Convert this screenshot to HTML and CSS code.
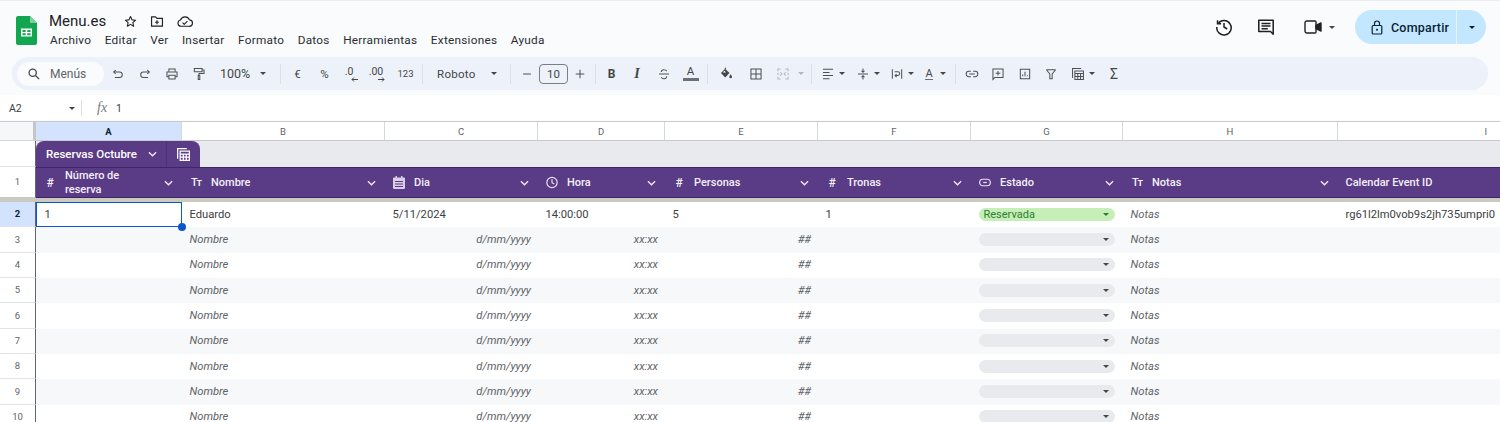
FILE: index.html
```html
<!DOCTYPE html>
<html lang="es">
<head>
  <meta charset="UTF-8">
  <title>Menu.es</title>
  <link rel="stylesheet" href="styles.css">
</head>
<body>
  <header class="topbar">
    <svg class="logo" width="21" height="29" viewBox="0 0 21 29">
      <path d="M2 0h12l7 7v20a2 2 0 0 1-2 2H2a2 2 0 0 1-2-2V2a2 2 0 0 1 2-2z" fill="#11a64f"/>
      <path d="M14 0l7 7h-7z" fill="#7fd0a0"/>
      <path d="M5 12.500h11v8H5z M6.500 14v2h3.200v-2z M11.300 14v2h3.200v-2z M6.500 17.300v2h3.200v-2z M11.300 17.300v2h3.200v-2z" fill="#fff" fill-rule="evenodd"/>
    </svg>
    <div class="doc">
      <div class="doc-title">
        <span class="doc-name">Menu.es</span>
        <svg class="star" width="13" height="13" viewBox="0 0 18 18" fill="none" stroke="#202124" stroke-width="1.500" stroke-linejoin="round"><path d="M9 2l2.100 4.700 5 .5-3.800 3.400 1.100 5L9 13l-4.400 2.600 1.100-5L1.900 7.200l5-.5z"/></svg>
        <svg width="14" height="13" viewBox="0 0 18 16" fill="none" stroke="#202124" stroke-width="1.500" stroke-linejoin="round"><path d="M2 2h5l2 2h7v10H2z"/><path d="M9 6.500v5M6.500 9h5"/></svg>
        <svg width="16" height="13" viewBox="0 0 20 16" fill="none" stroke="#202124" stroke-width="1.400" stroke-linejoin="round"><path d="M5 14a4 4 0 0 1-.6-7.900A6 6 0 0 1 15.600 6 4 4 0 0 1 15 14z"/><path d="M7 9.500l2 2 4-4"/></svg>
      </div>
      <nav class="menu">
        <span>Archivo</span><span>Editar</span><span>Ver</span><span>Insertar</span><span>Formato</span><span>Datos</span><span>Herramientas</span><span>Extensiones</span><span>Ayuda</span>
      </nav>
    </div>
    <div class="actions">
      <svg class="act-history" width="18" height="18" viewBox="0 0 20 20" fill="none" stroke="#202124" stroke-width="1.700"><path d="M3.600 6A8 8 0 1 1 2 10"/><path d="M2.800 2.500v4h4"/><path d="M10 5.500V10l3.500 2.200"/></svg>
      <svg class="act-comment" width="18" height="18" viewBox="0 0 20 20" fill="none" stroke="#202124" stroke-width="1.700" stroke-linejoin="round"><path d="M2 2.500h16V18l-3-3H2z"/><path d="M5 6h10M5 9h10M5 12h7"/></svg>
      <svg class="act-video" width="18" height="14" viewBox="0 0 18 14" fill="none" stroke="#202124" stroke-width="1.400" stroke-linejoin="round"><path d="M3 1h8a1 1 0 0 1 1 1v10a1 1 0 0 1-1 1H3a2 2 0 0 1-2-2V3a2 2 0 0 1 2-2z"/><path d="M12 5.500L17 3v8l-5-2.500z" fill="#202124"/></svg>
      <i class="caret act-caret"></i>
      <div class="share">
        <div class="share-main">
          <svg width="12" height="15" viewBox="0 0 12 15" fill="none" stroke="#0b1f33" stroke-width="1.200"><rect x="1.200" y="5.500" width="9.600" height="8.500" rx="1"/><path d="M3.500 5.500V3.500a2.500 2.500 0 0 1 5 0v2"/><circle cx="6" cy="9.800" r="1" fill="#0b1f33" stroke="none"/></svg>
          <span>Compartir</span>
        </div>
        <div class="share-more"><i class="caret"></i></div>
      </div>
    </div>
  </header>

  <div class="toolbar">
    <div class="search">
      <svg width="12" height="12" viewBox="0 0 14 14" fill="none" stroke="#444746" stroke-width="1.500"><circle cx="5.500" cy="5.500" r="4.200"/><path d="M8.700 8.700L13 13"/></svg>
      <span>Menús</span>
    </div>
    <div class="tool"><svg class="ico" viewBox="0 0 18 18"><path d="M6 4L3.500 6.500 6 9"/><path d="M3.500 6.500H11a3.500 3.500 0 0 1 0 7H5"/></svg></div>
    <div class="tool"><svg class="ico" viewBox="0 0 18 18"><path d="M12 4l2.500 2.500L12 9"/><path d="M14.500 6.500H7a3.500 3.500 0 0 0 0 7h6"/></svg></div>
    <div class="tool"><svg class="ico" viewBox="0 0 18 18"><path d="M5 6V2.500h8V6"/><path d="M5 12.500H2.500v-6h13v6H13"/><path d="M5 10.500h8v5H5z"/></svg></div>
    <div class="tool"><svg class="ico" viewBox="0 0 18 18"><path d="M3 2h10v4H3z"/><path d="M13 4h2.500v4.500H9V11"/><path d="M8 11h2v5H8z"/></svg></div>
    <div class="tool tool-zoom"><span>100%</span><i class="caret"></i></div>
    <i class="sep"></i>
    <div class="tool tool-text">€</div>
    <div class="tool tool-text">%</div>
    <div class="tool tool-dec"><span>.0</span><svg width="7" height="5" viewBox="0 0 7 5" class="dec-arrow" fill="none" stroke="#444746"><path d="M7 2.500H1M3 .5L1 2.500l2 2"/></svg></div>
    <div class="tool tool-dec"><span>.00</span><svg width="7" height="5" viewBox="0 0 7 5" class="dec-arrow" fill="none" stroke="#444746"><path d="M0 2.500h6M4 .5l2 2-2 2"/></svg></div>
    <div class="tool tool-num">123</div>
    <i class="sep"></i>
    <div class="tool tool-font"><span>Roboto</span><i class="caret"></i></div>
    <i class="sep"></i>
    <div class="tool tool-25"><svg class="ico" viewBox="0 0 18 18"><path d="M4 9h10"/></svg></div>
    <div class="size-box">10</div>
    <div class="tool tool-24"><svg class="ico" viewBox="0 0 18 18"><path d="M3.500 9h11M9 3.500v11"/></svg></div>
    <i class="sep"></i>
    <div class="tool tool-25 tool-bold">B</div>
    <div class="tool tool-26 tool-italic">I</div>
    <div class="tool"><svg class="ico" viewBox="0 0 18 18"><path d="M2.500 9h13"/><path d="M5.500 6.500a3 3 0 0 1 3.500-3c1.700 0 3 .8 3.500 2"/><path d="M12.500 12a3 3 0 0 1-3.500 3c-1.700 0-3-.8-3.500-2"/></svg></div>
    <div class="tool tool-color"><span>A</span><i class="color-bar"></i></div>
    <i class="sep"></i>
    <div class="tool tool-30"><svg width="14" height="15" viewBox="0 0 18 18" fill="#444746"><path d="M8 1l1.200 1.200-1 1 5.300 5.300-5.500 5.500L2.500 8.500 7 4z M7 5.500L4.700 7.800h4.600z"/><path d="M15 10c1 1.500 1.700 2.500 1.700 3.400a1.700 1.700 0 0 1-3.400 0c0-.9.700-1.900 1.700-3.400z"/></svg></div>
    <div class="tool tool-30"><svg class="ico" viewBox="0 0 18 18"><path d="M2.500 2.500h13v13h-13zM9 2.500v13M2.500 9h13"/></svg></div>
    <div class="tool tool-drop tool-merge"><svg class="ico ico-off" viewBox="0 0 18 18"><path d="M6 2.500H2.500v3M12 2.500h3.500v3M6 15.500H2.500v-3M12 15.500h3.500v-3M2.500 7.500v3M15.500 7.500v3"/><path d="M5.500 7l2 2-2 2M12.500 7l-2 2 2 2"/></svg><i class="caret caret-off"></i></div>
    <i class="sep"></i>
    <div class="tool tool-drop"><svg class="ico" viewBox="0 0 18 18"><path d="M2.500 3h13M2.500 7h8.500M2.500 11h13M2.500 15h8.500"/></svg><i class="caret"></i></div>
    <div class="tool tool-drop"><svg class="ico" viewBox="0 0 18 18"><path d="M2.500 9h13"/><path d="M9 2v4.500M7 4.800l2 2 2-2M9 16v-4.500M7 13.200l2-2 2 2"/></svg><i class="caret"></i></div>
    <div class="tool tool-34"><svg class="ico" viewBox="0 0 18 18"><path d="M3 3v12M15 3v12"/><path d="M6 6h4a2.500 2.500 0 0 1 0 5H6.500M8.500 9l-2 2 2 2"/></svg><i class="caret"></i></div>
    <div class="tool tool-33"><span class="rotate-a">A</span><i class="caret"></i></div>
    <i class="sep"></i>
    <div class="tool tool-25"><svg class="ico" viewBox="0 0 18 18"><path d="M7.500 5.500H5a3.500 3.500 0 0 0 0 7h2.500M10.500 5.500H13a3.500 3.500 0 0 1 0 7h-2.500M5.500 9h7"/></svg></div>
    <div class="tool"><svg class="ico" viewBox="0 0 18 18"><path d="M2.500 2.500h13v11H5l-2.500 2.500z"/><path d="M9 5v6M6 8h6"/></svg></div>
    <div class="tool"><svg class="ico" viewBox="0 0 18 18"><path d="M3 3h12v12H3z"/><path d="M6 12V9.500M9 12V6M12 12v-1.500"/></svg></div>
    <div class="tool tool-26"><svg class="ico" viewBox="0 0 18 18"><path d="M3 3.500h12M3 3.500L7.500 9v6h3V9L15 3.500"/></svg></div>
    <div class="tool tool-37"><svg class="ico" viewBox="0 0 18 18"><path d="M2 14V2h11"/><path d="M5 5h11v11H5zM5 8.500h11M5 12.200h11M8.700 8.500V16M12.300 8.500V16"/></svg><i class="caret"></i></div>
    <div class="tool tool-26 tool-sigma">Σ</div>
  </div>

  <div class="formula">
    <span class="cell-ref">A2</span>
    <i class="caret"></i>
    <i class="formula-sep"></i>
    <span class="fx">fx</span>
    <span class="formula-value">1</span>
  </div>

  <main class="sheet">
    <div class="row col-heads">
      <div class="corner"></div>
      <div class="col-head is-active">A</div>
      <div class="col-head">B</div>
      <div class="col-head">C</div>
      <div class="col-head">D</div>
      <div class="col-head">E</div>
      <div class="col-head">F</div>
      <div class="col-head">G</div>
      <div class="col-head">H</div>
      <div class="col-head col-last">I</div>
    </div>

    <div class="tab-row">
      <div class="row-num"></div>
      <div class="tab-band">
        <div class="tab">
          <span class="tab-name">Reservas Octubre</span>
          <svg class="chev tab-chev" viewBox="0 0 10 6"><path d="M1 1l4 4 4-4"/></svg>
          <div class="tab-view">
            <svg width="15" height="15" viewBox="0 0 18 18" fill="none" stroke="#fff" stroke-width="1.500"><path d="M2 14V2h11"/><path d="M5 5h11v11H5zM5 8.500h11M5 12.200h11M8.700 8.500V16M12.300 8.500V16"/></svg>
          </div>
        </div>
      </div>
    </div>

    <div class="row head-row">
      <div class="row-num">1</div>
      <div class="th"><b class="th-ico">#</b><span class="th-label th-wrap">Número de reserva</span><svg class="chev" viewBox="0 0 10 6"><path d="M1 1l4 4 4-4"/></svg></div>
      <div class="th"><b class="th-ico th-type">Tт</b><span class="th-label">Nombre</span><svg class="chev" viewBox="0 0 10 6"><path d="M1 1l4 4 4-4"/></svg></div>
      <div class="th"><svg class="th-svg" viewBox="0 0 12 13" fill="#d9cfe8"><path d="M2.500 0h1.500v1.500h4V0h1.500v1.500H11a1 1 0 0 1 1 1V12a1 1 0 0 1-1 1H1a1 1 0 0 1-1-1V2.500a1 1 0 0 1 1-1h1.500z"/><path d="M2 5h8v1H2zM2 7.500h8v1H2zM2 10h8v1H2z" fill="#5a3b85"/></svg><span class="th-label">Dia</span><svg class="chev" viewBox="0 0 10 6"><path d="M1 1l4 4 4-4"/></svg></div>
      <div class="th"><svg class="th-svg" viewBox="0 0 13 13" fill="none" stroke="#e9e2f3" stroke-width="1.300"><circle cx="6.500" cy="6.500" r="5.600"/><path d="M6.500 3v3.700l2.500 1.500"/></svg><span class="th-label">Hora</span><svg class="chev" viewBox="0 0 10 6"><path d="M1 1l4 4 4-4"/></svg></div>
      <div class="th"><b class="th-ico">#</b><span class="th-label">Personas</span><svg class="chev" viewBox="0 0 10 6"><path d="M1 1l4 4 4-4"/></svg></div>
      <div class="th"><b class="th-ico">#</b><span class="th-label">Tronas</span><svg class="chev" viewBox="0 0 10 6"><path d="M1 1l4 4 4-4"/></svg></div>
      <div class="th"><svg class="th-svg" viewBox="0 0 13 13" fill="none" stroke="#e9e2f3" stroke-width="1.300"><rect x=".7" y="3" width="11.600" height="7" rx="3.500"/><path d="M4.500 6.500h4"/></svg><span class="th-label">Estado</span><svg class="chev" viewBox="0 0 10 6"><path d="M1 1l4 4 4-4"/></svg></div>
      <div class="th"><b class="th-ico th-type">Tт</b><span class="th-label">Notas</span><svg class="chev" viewBox="0 0 10 6"><path d="M1 1l4 4 4-4"/></svg></div>
      <div class="th th-plain"><span class="th-label">Calendar Event ID</span></div>
    </div>

    <div class="row data is-current">
      <div class="row-num">2</div>
      <div class="td td-selected">1<i class="handle"></i></div>
      <div class="td">Eduardo</div>
      <div class="td">5/11/2024</div>
      <div class="td">14:00:00</div>
      <div class="td">5</div>
      <div class="td">1</div>
      <div class="td"><div class="chip chip-green"><span>Reservada</span><i class="caret"></i></div></div>
      <div class="td hint">Notas</div>
      <div class="td">rg61l2lm0vob9s2jh735umpri0</div>
    </div>
    <div class="row data alt">
      <div class="row-num">3</div><div class="td"></div><div class="td hint">Nombre</div><div class="td hint right">d/mm/yyyy</div><div class="td hint right">xx:xx</div><div class="td hint right">##</div><div class="td"></div><div class="td"><div class="chip"><i class="caret"></i></div></div><div class="td hint">Notas</div><div class="td"></div>
    </div>
    <div class="row data">
      <div class="row-num">4</div><div class="td"></div><div class="td hint">Nombre</div><div class="td hint right">d/mm/yyyy</div><div class="td hint right">xx:xx</div><div class="td hint right">##</div><div class="td"></div><div class="td"><div class="chip"><i class="caret"></i></div></div><div class="td hint">Notas</div><div class="td"></div>
    </div>
    <div class="row data alt">
      <div class="row-num">5</div><div class="td"></div><div class="td hint">Nombre</div><div class="td hint right">d/mm/yyyy</div><div class="td hint right">xx:xx</div><div class="td hint right">##</div><div class="td"></div><div class="td"><div class="chip"><i class="caret"></i></div></div><div class="td hint">Notas</div><div class="td"></div>
    </div>
    <div class="row data">
      <div class="row-num">6</div><div class="td"></div><div class="td hint">Nombre</div><div class="td hint right">d/mm/yyyy</div><div class="td hint right">xx:xx</div><div class="td hint right">##</div><div class="td"></div><div class="td"><div class="chip"><i class="caret"></i></div></div><div class="td hint">Notas</div><div class="td"></div>
    </div>
    <div class="row data alt">
      <div class="row-num">7</div><div class="td"></div><div class="td hint">Nombre</div><div class="td hint right">d/mm/yyyy</div><div class="td hint right">xx:xx</div><div class="td hint right">##</div><div class="td"></div><div class="td"><div class="chip"><i class="caret"></i></div></div><div class="td hint">Notas</div><div class="td"></div>
    </div>
    <div class="row data">
      <div class="row-num">8</div><div class="td"></div><div class="td hint">Nombre</div><div class="td hint right">d/mm/yyyy</div><div class="td hint right">xx:xx</div><div class="td hint right">##</div><div class="td"></div><div class="td"><div class="chip"><i class="caret"></i></div></div><div class="td hint">Notas</div><div class="td"></div>
    </div>
    <div class="row data alt">
      <div class="row-num">9</div><div class="td"></div><div class="td hint">Nombre</div><div class="td hint right">d/mm/yyyy</div><div class="td hint right">xx:xx</div><div class="td hint right">##</div><div class="td"></div><div class="td"><div class="chip"><i class="caret"></i></div></div><div class="td hint">Notas</div><div class="td"></div>
    </div>
    <div class="row data">
      <div class="row-num">10</div><div class="td"></div><div class="td hint">Nombre</div><div class="td hint right">d/mm/yyyy</div><div class="td hint right">xx:xx</div><div class="td hint right">##</div><div class="td"></div><div class="td"><div class="chip"><i class="caret"></i></div></div><div class="td hint">Notas</div><div class="td"></div>
    </div>
  </main>
</body>
</html>
```

FILE: styles.css
```css
* {
  margin: 0;
  padding: 0;
  box-sizing: border-box;
}

html, body {
  height: 422px;
  overflow: hidden;
}

body {
  background: #f9fbfd;
  font-family: Roboto, "Liberation Sans", sans-serif;
  color: #202124;
  width: 1500px;
}

i {
  display: block;
}

.caret {
  width: 0;
  height: 0;
  border-left: 3.5px solid transparent;
  border-right: 3.5px solid transparent;
  border-top: 3.5px solid #444746;
}

.caret-off {
  border-top-color: #b4b7ba;
}

/* top bar */
.topbar {
  height: 57px;
  display: flex;
  align-items: flex-start;
  padding: 15px 14px 0 16px;
  border-top: 1px solid #ececee;
}

.logo {
  flex: none;
}

.doc {
  margin-left: 12px;
  margin-top: -4px;
}

.doc-title {
  display: flex;
  align-items: center;
  height: 18px;
}

.doc-name {
  font-size: 15px;
  width: 75px;
}

.doc-title svg {
  margin-right: 13px;
}

.menu {
  display: flex;
  gap: 13.500px;
  margin-top: 3px;
  margin-left: 1px;
  font-size: 11.800px;
  letter-spacing: .25px;
  color: #2b2d30;
}

.actions {
  margin-left: auto;
  margin-top: -6px;
  height: 34px;
  display: flex;
  align-items: center;
}

.act-comment {
  margin-left: 24px;
}

.act-video {
  margin-left: 29px;
}

.act-caret {
  margin-left: 7px;
}

.share {
  margin-left: 20px;
  width: 131px;
  height: 34px;
  background: #c2e7ff;
  border-radius: 17px;
  display: flex;
  color: #0b1f33;
}

.share-main {
  width: 102px;
  padding-left: 16px;
  display: flex;
  align-items: center;
  gap: 8px;
  font-size: 12.500px;
  font-weight: 500;
  letter-spacing: .2px;
  border-right: 1px solid #e3f3ff;
}

.share-more {
  flex: 1;
  display: flex;
  align-items: center;
  justify-content: center;
}

.share-more .caret {
  border-top-color: #0b1f33;
}

/* toolbar */
.toolbar {
  height: 33px;
  margin: 0 12px;
  padding-left: 5px;
  background: #edf2fa;
  border-radius: 16px;
  display: flex;
  align-items: center;
  color: #444746;
  font-size: 11px;
}

.search {
  width: 87px;
  height: 24px;
  background: #f9fbfd;
  border-radius: 12px;
  display: flex;
  align-items: center;
  gap: 10px;
  padding-left: 11px;
  font-size: 12px;
  color: #5f6368;
}

.tool {
  width: 27px;
  height: 24px;
  flex: none;
  display: flex;
  align-items: center;
  justify-content: center;
}

.ico {
  width: 14px;
  height: 14px;
  fill: none;
  stroke: #4d5053;
  stroke-width: 1.300;
}

.ico-off {
  stroke: #b4b7ba;
}

.tool-zoom {
  width: 65px;
  justify-content: flex-start;
  padding-left: 8px;
  gap: 10px;
  font-size: 12.500px;
}

.sep {
  flex: none;
  width: 1px;
  height: 20px;
  margin: 0 3px;
  background: #dde1e7;
}

.tool-text {
  font-size: 11.500px;
}

.tool-dec {
  position: relative;
  font-size: 10.500px;
  padding: 0 5px 5px 0;
}

.dec-arrow {
  position: absolute;
  right: 7px;
  bottom: 4px;
}

.tool-num {
  font-size: 9.500px;
}

.tool-font {
  width: 81px;
  justify-content: flex-start;
  padding-left: 11px;
  gap: 15px;
  font-size: 11.500px;
  letter-spacing: .3px;
}

.tool-24 { width: 24px; }
.tool-25 { width: 25px; }
.tool-26 { width: 26px; }
.tool-30 { width: 30px; }
.tool-33 { width: 33px; gap: 7px; }
.tool-34 { width: 34px; gap: 4px; }
.tool-37 { width: 37px; gap: 4px; }

.tool-drop {
  width: 35px;
  gap: 4px;
}

.tool-merge {
  width: 37px;
  gap: 8px;
}

.size-box {
  width: 29px;
  height: 20px;
  flex: none;
  border: 1px solid #7b7e82;
  border-radius: 4px;
  display: flex;
  align-items: center;
  justify-content: center;
  font-size: 11.500px;
}

.tool-bold {
  font-weight: 700;
  font-size: 12px;
}

.tool-italic {
  font-family: "Liberation Serif", serif;
  font-style: italic;
  font-weight: 700;
  font-size: 14px;
}

.tool-color {
  flex-direction: column;
  font-size: 11.500px;
  line-height: 11px;
}

.color-bar {
  width: 16px;
  height: 3px;
  margin-top: 1px;
  background: #6d7074;
}

.rotate-a {
  font-size: 11px;
  border-bottom: 1.500px solid #6d7074;
  line-height: 11px;
}

.tool-sigma {
  font-size: 14px;
}

/* formula bar */
.formula {
  height: 25px;
  margin-top: 5px;
  display: flex;
  align-items: center;
  background: #fff;
  font-size: 10.500px;
  padding: 1px 0 0 9px;
  color: #3c4043;
}

.cell-ref {
  width: 60px;
}

.formula-sep {
  width: 1px;
  height: 16px;
  background: #dadce0;
  margin-left: 6px;
}

.fx {
  font-family: "Liberation Serif", serif;
  font-style: italic;
  font-size: 14px;
  color: #777a7e;
  margin-left: 15px;
  width: 19px;
}

/* sheet */
.sheet {
  margin-top: 1px;
  background: #fff;
  border-top: 1px solid #c7c9cc;
  height: 301px;
  overflow: hidden;
}

.row {
  display: grid;
  grid-template-columns: 36px 146px 203px 153px 127px 153px 153px 152px 215px 162px;
}

.col-heads {
  height: 19px;
  font-size: 9.500px;
  color: #5f6368;
}

.corner {
  background: #f6f7f8;
  border-right: 3px solid #c4c6c9;
  border-bottom: 1px solid #d6d8db;
}

.col-head {
  display: flex;
  align-items: center;
  justify-content: center;
  border-right: 1px solid #d6d8db;
  border-bottom: 1px solid #c7c9cc;
}

.col-last {
  justify-content: flex-end;
  padding-right: 13px;
  border-right: 0;
}

.col-head.is-active {
  background: #d3e3fd;
  color: #0b1f33;
  font-weight: 700;
}

.tab-row {
  height: 26px;
  display: grid;
  grid-template-columns: 36px 1fr;
}

.row-num {
  display: flex;
  align-items: center;
  justify-content: center;
  background: #fff;
  font-size: 9.500px;
  line-height: 1;
  color: #5f6368;
  border-right: 1.500px solid #62666b;
  border-bottom: 1px solid #e1e3e6;
}

.tab-band {
  background: #e8eaed;
}

.tab {
  width: 164px;
  height: 26px;
  background: #5a3b85;
  border-radius: 8px 8px 0 0;
  display: flex;
  align-items: center;
  color: #fff;
  padding-left: 10px;
  font-size: 11.500px;
  font-weight: 500;
}

.tab-name {
  width: 102px;
}

.tab-view {
  margin-left: 9px;
  padding-left: 9px;
  height: 26px;
  border-left: 1px solid #4d3176;
  display: flex;
  align-items: center;
}

.chev {
  width: 9px;
  height: 6px;
  fill: none;
  stroke: #efeaf6;
  stroke-width: 1.500;
  flex: none;
}

.head-row {
  height: 35px;
  border-bottom: 4px solid #cbcac1;
}

.head-row .row-num {
  height: 31px;
  border-bottom: 1px solid #c7c9cc;
}

.th {
  height: 31px;
  background: #5a3b85;
  border-top: 1px solid #3d2566;
  border-bottom: 1px solid #3d2566;
  color: #f4f0fa;
  display: flex;
  align-items: center;
  padding-left: 7.500px;
  padding-right: 9px;
  font-size: 11px;
  font-weight: 500;
}

.th-ico {
  width: 13px;
  margin-right: 8.500px;
  text-align: center;
  font-size: 12px;
  font-weight: 500;
  flex: none;
}

.th-type {
  font-size: 11px;
  letter-spacing: -1px;
}

.th-svg {
  width: 12px;
  height: 13px;
  margin-right: 9.500px;
  flex: none;
}

.th-label {
  flex: 1;
}

.th-wrap {
  line-height: 13.500px;
  padding-right: 22px;
}

.data {
  height: 25.330px;
}

.alt .td {
  background: #f6f8f9;
}

.is-current .row-num {
  background: #d3e3fd;
  color: #0b1f33;
  font-weight: 700;
}

.td {
  position: relative;
  display: flex;
  align-items: center;
  padding: 0 7px 1px 7.500px;
  font-size: 11.200px;
  line-height: 1;
  color: #3c4043;
  white-space: nowrap;
}

.hint {
  font-style: italic;
  color: #5f6368;
}

.right {
  justify-content: flex-end;
}

.td-selected {
  border: 1.500px solid #0b57d0;
}

.handle {
  position: absolute;
  right: -5px;
  bottom: -5px;
  width: 8px;
  height: 8px;
  background: #0b57d0;
  border-radius: 50%;
  z-index: 2;
}

.chip {
  width: 136px;
  height: 13px;
  border-radius: 7px;
  background: #e8eaed;
  display: flex;
  align-items: center;
  justify-content: flex-end;
  padding: 0 6px 0 5px;
  font-style: normal;
  font-size: 11px;
}

.chip-green {
  background: #c6efb8;
  color: #2e7d32;
  justify-content: space-between;
}

.chip-green .caret {
  border-top-color: #2e7d32;
}
```
